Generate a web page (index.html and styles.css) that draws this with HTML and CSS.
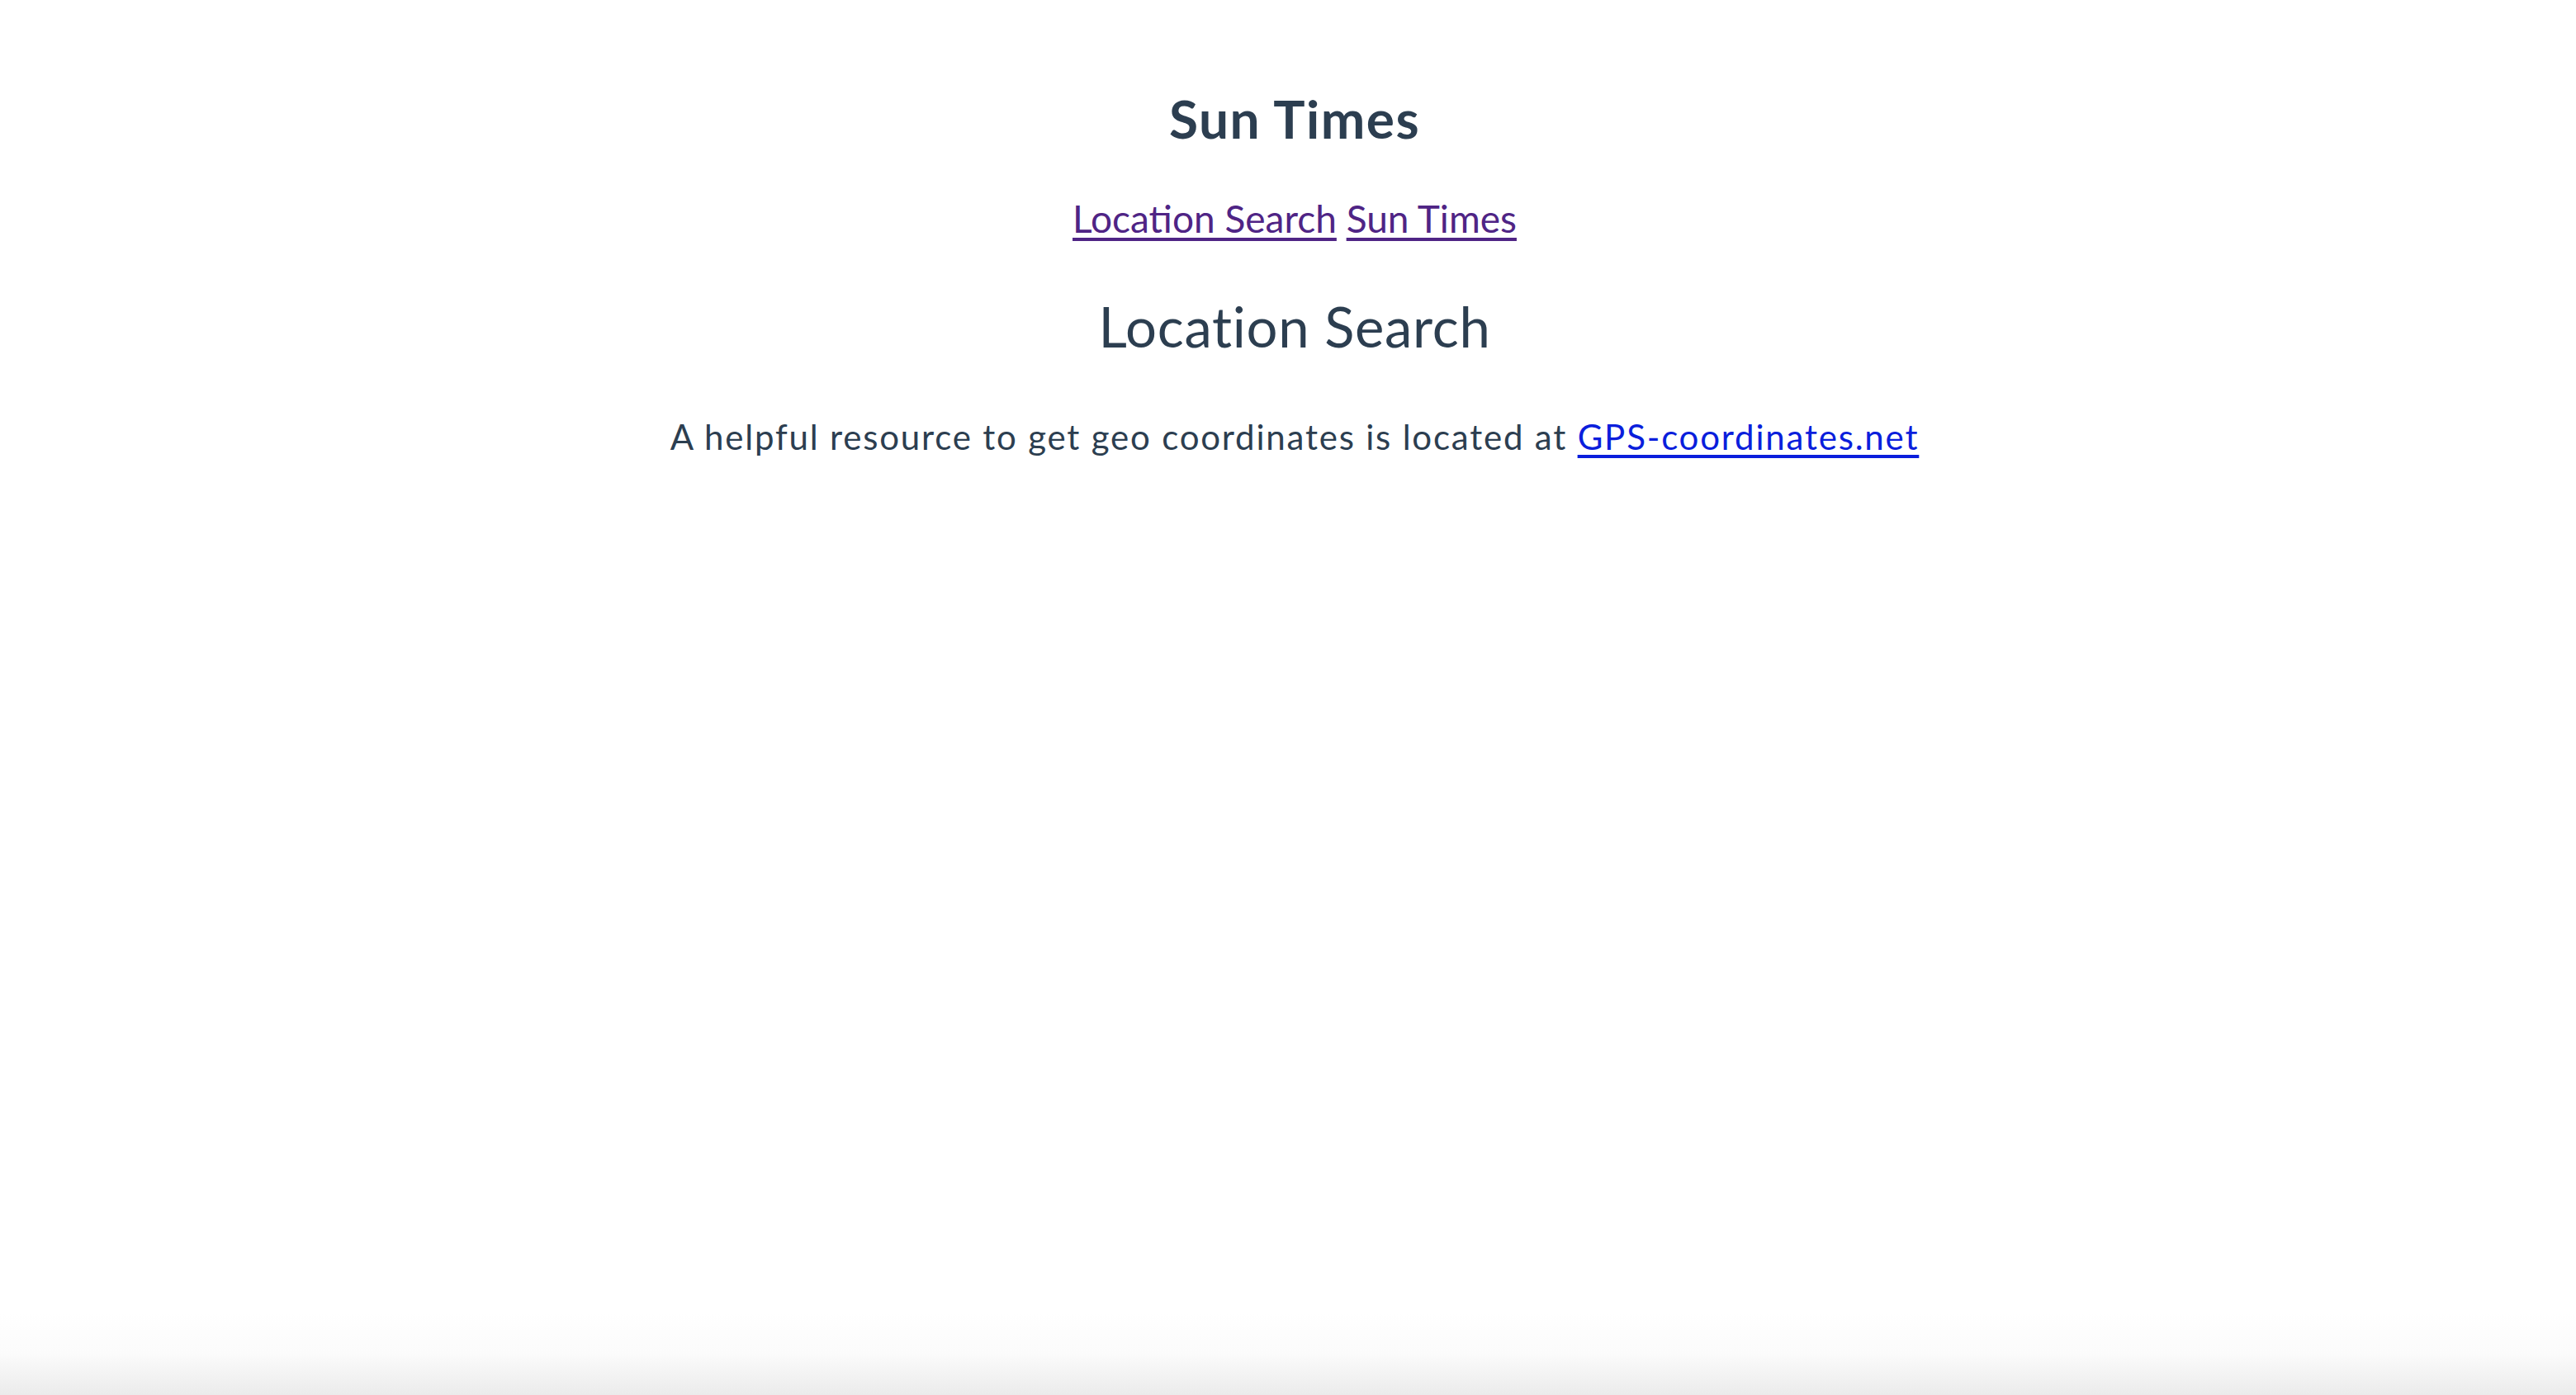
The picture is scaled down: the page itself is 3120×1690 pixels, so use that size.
FILE: index.html
```html
<!DOCTYPE html>
<html lang="en">
<head>
<meta charset="utf-8">
<title>Sun Times</title>
<link rel="stylesheet" href="styles.css">
</head>
<body>
<div class="app">
  <h1 class="title">Sun Times</h1>
  <nav class="nav"><a class="nav-link" href="#search">Location Search</a> <a class="nav-link" href="#times">Sun Times</a></nav>
  <h2 class="heading">Location Search</h2>
  <p class="intro">A helpful resource to get geo coordinates is located at <a class="ext-link" href="#gps">GPS-coordinates.net</a></p>
</div>
</body>
</html>
```

FILE: styles.css
```css
html {
  min-height: 100%;
  background: linear-gradient(to bottom, #ffffff calc(100% - 100px), #fbfbfb calc(100% - 50px), #ebebeb 100%);
}
body {
  margin: 0;
  min-height: 100vh;
}
.app {
  font-family: Lato, "Noto Sans", sans-serif;
  color: #2c3e50;
  text-align: center;
  padding-top: 106px;
  padding-left: 16px;
}
.title {
  margin: 0;
  font-size: 64px;
  line-height: 1.2;
  font-weight: 700;
  letter-spacing: 1.5px;
}
.nav {
  margin-top: 54px;
  font-size: 46px;
  line-height: 1.2;
}
.nav-link {
  color: #4f2485;
  text-decoration-thickness: 4px;
  text-underline-offset: 6px;
}
.heading {
  margin: 63px 0 0;
  font-size: 67px;
  line-height: 1.2;
  font-weight: 400;
  letter-spacing: 0.7px;
}
.intro {
  margin: 69px 0 0;
  font-size: 42px;
  line-height: 1.2;
  letter-spacing: 1.8px;
}
.ext-link {
  color: #0a1edc;
  text-decoration-thickness: 4px;
  text-underline-offset: 6px;
}
```
